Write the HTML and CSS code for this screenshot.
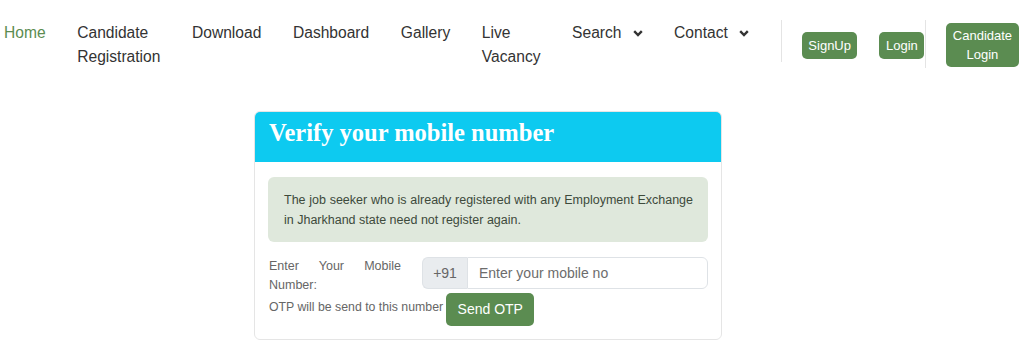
FILE: index.html
```html
<!DOCTYPE html>
<html lang="en">
<head>
<meta charset="utf-8">
<title>Verify your mobile number</title>
<link rel="stylesheet" href="styles.css">
</head>
<body>
<nav class="nav">
  <ul class="menu">
    <li class="item active">Home</li>
    <li class="item narrow">Candidate Registration</li>
    <li class="item">Download</li>
    <li class="item">Dashboard</li>
    <li class="item">Gallery</li>
    <li class="item narrow">Live Vacancy</li>
    <li class="item drop">Search <svg class="chev" viewBox="0 0 10 7" width="10" height="7"><path d="M1.2 1.2 5 5 8.8 1.2" fill="none" stroke="#333" stroke-width="2.4"/></svg></li>
    <li class="item drop">Contact <svg class="chev" viewBox="0 0 10 7" width="10" height="7"><path d="M1.2 1.2 5 5 8.8 1.2" fill="none" stroke="#333" stroke-width="2.4"/></svg></li>
  </ul>
  <div class="actions">
    <span class="divider short"></span>
    <a class="btn small">SignUp</a>
    <a class="btn small">Login</a>
    <span class="divider tall"></span>
    <a class="btn cand">Candidate<br>Login</a>
  </div>
</nav>

<main class="page">
  <section class="card">
    <header class="card-head">
      <h3 class="title">Verify your mobile number</h3>
    </header>
    <div class="card-body">
      <div class="alert">The job seeker who is already registered with any Employment Exchange in Jharkhand state need not register again.</div>
      <div class="row">
        <label class="label">Enter Your Mobile Number:</label>
        <div class="group">
          <span class="addon">+91</span>
          <input class="field" type="text" placeholder="Enter your mobile no">
        </div>
      </div>
      <div class="row2">
        <span class="note">OTP will be send to this number</span>
        <button class="send">Send OTP</button>
      </div>
    </div>
  </section>
</main>
</body>
</html>
```

FILE: styles.css
```css
* { box-sizing: border-box; }
body {
  margin: 0;
  background: #fff;
  font-family: "Liberation Sans", Arial, sans-serif;
  color: #333;
}
.nav {
  display: flex;
  align-items: flex-start;
  height: 70px;
  padding: 21px 0 0 4px;
}
.menu {
  display: flex;
  align-items: flex-start;
  list-style: none;
  margin: 0;
  padding: 0;
  gap: 31.6px;
}
.item {
  font-size: 15.6px;
  line-height: 24px;
  color: #333;
  white-space: nowrap;
}
.item.narrow {
  white-space: normal;
  width: min-content;
}
.item.active { color: #5b8c51; }
.item.drop { display: flex; align-items: center; }
.chev { margin-left: 11px; margin-top: 1px; }
.actions {
  display: flex;
  align-items: flex-start;
  margin-left: 32px;
  margin-top: -1px;
}
.divider {
  width: 1px;
  background: #e4e4e4;
}
.divider.short { height: 42px; margin-right: 20px; }
.divider.tall { height: 48px; margin-right: 20px; margin-left: 1px; }
.btn {
  display: inline-block;
  background: #5b8c51;
  color: #fff;
  font-size: 13px;
  line-height: 19px;
  border-radius: 5px;
  text-align: center;
}
.btn.small { padding: 4px 6.5px; margin-top: 12px; margin-right: 22px; }
.btn.small + .btn.small { margin-right: 0; }
.btn.cand { padding: 3px 6.5px; margin-top: 3px; }

.page {
  padding: 41px 0 0 254px;
}
.card {
  width: 468px;
  border: 1px solid #e5e5e5;
  border-radius: 6px;
  overflow: hidden;
}
.card-head {
  background: #0dcaf0;
  padding: 6px 14px 14px;
}
.title {
  margin: 0;
  font-family: "Liberation Serif", "Times New Roman", serif;
  font-weight: bold;
  font-size: 24.5px;
  line-height: 30px;
  color: #fff;
}
.card-body {
  padding: 15px 13px 13px;
}
.alert {
  background: #dfe8dc;
  border-radius: 6px;
  padding: 14px 15px 12px 16px;
  font-size: 12.5px;
  line-height: 19.5px;
  color: #3d4a3b;
  text-align: justify;
}
.row {
  display: flex;
  align-items: flex-start;
  height: 32px;
  margin-top: 15px;
}
.label {
  width: 132px;
  flex: none;
  margin-left: 1px;
  margin-right: 21px;
  font-size: 12.5px;
  line-height: 19px;
  color: #666;
  text-align: justify;
}
.group {
  display: flex;
  flex: 1;
  height: 32px;
}
.addon {
  width: 45px;
  background: #e9ecef;
  border: 1px solid #dee2e6;
  border-right: 0;
  border-radius: 6px 0 0 6px;
  font-size: 14px;
  line-height: 30px;
  color: #666;
  text-align: center;
}
.field {
  flex: 1;
  min-width: 0;
  border: 1px solid #dee2e6;
  border-radius: 0 6px 6px 0;
  padding: 0 11px;
  font-family: "Liberation Sans", Arial, sans-serif;
  font-size: 14px;
  color: #333;
  outline: none;
}
.field::placeholder { color: #6c6c6c; }
.row2 {
  display: flex;
  align-items: center;
  gap: 3px;
  margin-top: 4px;
  padding-left: 1px;
}
.note {
  font-size: 12.3px;
  line-height: 19px;
  color: #666;
  margin-top: -4px;
}
.send {
  background: #5b8c51;
  color: #fff;
  border: 0;
  border-radius: 5px;
  font-family: "Liberation Sans", Arial, sans-serif;
  font-size: 14px;
  line-height: 21px;
  padding: 6px 11.5px;
}
```
